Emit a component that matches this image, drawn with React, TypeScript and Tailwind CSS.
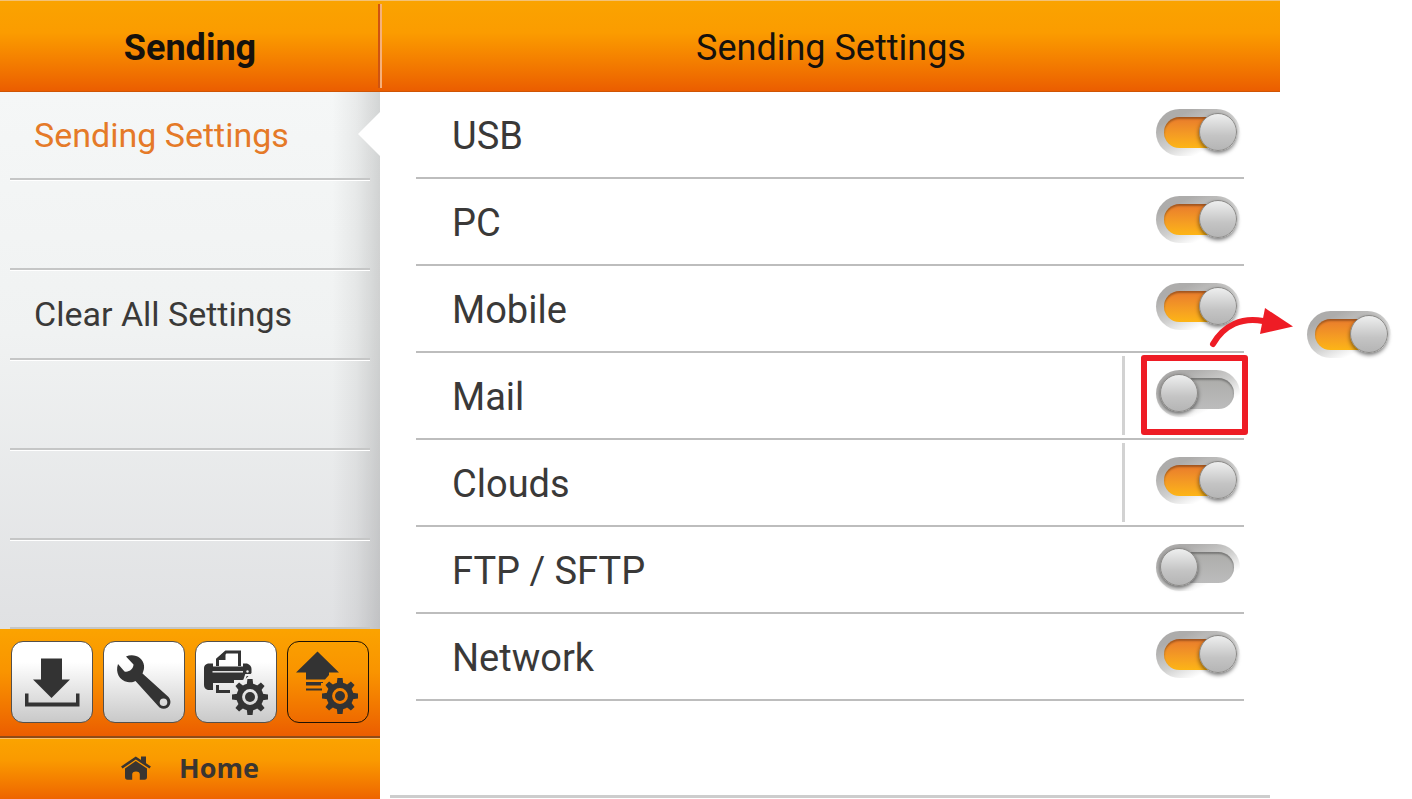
import type { ReactNode } from "react";

type Setting = { id: string; label: string; on: boolean; divided?: boolean; marked?: boolean };

const settings: Setting[] = [
  { id: "usb", label: "USB", on: true },
  { id: "pc", label: "PC", on: true },
  { id: "mobile", label: "Mobile", on: true },
  { id: "mail", label: "Mail", on: false, divided: true, marked: true },
  { id: "clouds", label: "Clouds", on: true, divided: true },
  { id: "ftp", label: "FTP / SFTP", on: false },
  { id: "network", label: "Network", on: true },
];

const menu = ["Sending Settings", "", "Clear All Settings", "", "", ""];

function Toggle({ id, on, label }: { id: string; on: boolean; label?: string }) {
  return (
    <input
      id={id}
      type="checkbox"
      defaultChecked={on}
      aria-label={label}
      className="relative block h-[47px] w-[84px] shrink-0 cursor-pointer appearance-none rounded-full bg-linear-155 from-[#adacab] from-20% via-[#cfcfce] via-50% to-white to-75% before:absolute before:top-2 before:left-2 before:h-[31px] before:w-[70px] before:rounded-full before:bg-linear-to-b before:from-[#acacaa] before:to-[#bcbcbc] before:shadow-[inset_0_2px_2px_rgba(0,0,0,0.3)] after:absolute after:top-1 after:left-1 after:size-[38px] after:rounded-full after:border after:border-[#8b8a88] after:bg-linear-to-b after:from-[#eeefef] after:via-[#c4c4c4] after:via-60% after:to-[#b5b5b5] after:shadow-[0_2px_4px_rgba(0,0,0,0.55)] checked:before:from-[#e87a2c] checked:before:to-[#fdb515] checked:after:left-[43px]"
    />
  );
}

function Gear({ x, y }: { x: number; y: number }) {
  return (
    <g transform={`translate(${x} ${y})`}>
      <circle r="10.7" fill="none" stroke="#333" strokeWidth="5.6" />
      <circle r="5" fill="#333" />
      {[0, 45, 90, 135, 180, 225, 270, 315].map((a) => (
        <path key={a} d="M-3.2-12.5-2.6-18H2.6L3.2-12.5Z" fill="#333" transform={`rotate(${a})`} />
      ))}
    </g>
  );
}

function ToolIcon({ children }: { children: ReactNode }) {
  return (
    <svg viewBox="0 0 82 82" className="absolute -inset-px size-[82px]" fill="#333" aria-hidden="true">
      {children}
    </svg>
  );
}

const tools = [
  {
    name: "Receive",
    icon: (
      <ToolIcon>
        <path d="M30 17.5H51V38.5H59L40.5 57 22 38.5H30Z" />
        <path d="M14 52.5H17.5V61.5H65V52.5H68.5V65.5H14Z" />
      </ToolIcon>
    ),
  },
  {
    name: "Maintenance",
    icon: (
      <ToolIcon>
        <path
          fillRule="evenodd"
          d="M23 15.5C31 12 40 16.500 41 24.500 41.400 27.500 40.500 30 39.500 32.500L65.500 56C71 62.500 64 71 56.500 66.500L32.500 40C30 41.500 27.500 41.500 24.500 41 16.500 39.500 12 31.500 15 23L21.500 30.500C26 31.500 30.500 28 30.500 23.500ZM60.500 57.500A3.800 3.800 0 1 0 60.500 65.100 3.800 3.800 0 1 0 60.500 57.500Z"
        />
      </ToolIcon>
    ),
  },
  {
    name: "Printer settings",
    icon: (
      <ToolIcon>
        <path d="M22.500 25V18.500L31 11H44.500V25" fill="none" stroke="#333" strokeWidth="3" />
        <path d="M21 19 30.500 10V19Z" />
        <path d="M13 22.500H18V25.500H48V22.500H52Q56.500 24 56.500 28V32L50 38.500 47 39H18V49H13Q9 48 9 44V27Q9 23.500 13 22.500Z" />
        <path d="M17.500 30.800H48" stroke="#e8e8e8" strokeWidth="1.500" />
        <path d="M18 40.500H39" stroke="#333" strokeWidth="3" />
        <path d="M22.500 44V50.500H35" fill="none" stroke="#333" strokeWidth="3" />
        <path d="M40 43 44 40 49 40 51 34 58 34" fill="none" stroke="#efefef" strokeWidth="2" />
        <circle cx="52.500" cy="30.500" r="1.200" fill="#eee" />
        <Gear x={55} y={56} />
      </ToolIcon>
    ),
  },
  {
    name: "Sending settings",
    active: true,
    icon: (
      <ToolIcon>
        <path d="M30.500 10.500 52 31.500H42V34L38 38.500H19V31.500H9Z" />
        <path d="M19 41H36V42H34V44.500H19ZM19 47.500H35V49.500H19Z" />
        <Gear x={53} y={55} />
      </ToolIcon>
    ),
  },
];

export default function App() {
  return (
    <div className="min-h-screen overflow-hidden bg-white pr-33 font-[Roboto,sans-serif] text-[#3a3938]">
      <div className="flex min-h-screen flex-col">
        {/* Title bar */}
        <header className="flex h-[92px] items-stretch border-t border-[#f3c276] border-b border-b-[#cf5505] bg-linear-to-b from-[#faa300] via-[#fb9c00] via-35% to-[#eb5d00] text-4xl text-[#15110c]">
          <h2 className="flex w-[380px] shrink-0 items-center justify-center pt-1 font-bold">Sending</h2>
          <span className="-ml-0.5 my-[3px] w-1 border-l-2 border-r-2 border-l-[#cf5410] border-r-[#f6b07a]" />
          <h1 className="flex flex-1 items-center justify-center pt-1">Sending Settings</h1>
        </header>

        <div className="flex flex-1">
          {/* Sidebar */}
          <aside className="flex w-[380px] shrink-0 flex-col">
            <nav className="relative flex-1 overflow-hidden bg-linear-to-b from-[#f5f7f7] via-[#f0f2f2] via-45% to-[#e0e1e3]">
              <div className="absolute inset-y-0 right-0 w-12 bg-linear-to-r from-transparent via-black/5 via-50% to-black/14" />
              <svg viewBox="0 0 22 44" className="absolute top-5 right-0 h-11 w-[22px]" aria-hidden="true">
                <path d="M22 0 0 22 22 44Z" fill="#fff" />
              </svg>
              <ul className="relative px-2.5 text-[34px]">
                {menu.map((item, i) => (
                  <li key={i} className="h-[90px] border-b border-white first:h-[89px] last:h-[88px] last:border-b-0">
                    <div className="flex h-full items-center border-b-2 border-[#c5c6c6] pl-6">
                      {item && (
                        <a href="#" className={i === 0 ? "text-[#e57a28]" : ""}>
                          {item}
                        </a>
                      )}
                    </div>
                  </li>
                ))}
              </ul>
            </nav>

            <div className="grid grid-cols-4 gap-2.5 border-b-2 border-[#8f4a16] bg-linear-to-b from-[#fba300] via-[#f99400] via-40% to-[#eb5d00] px-[11px] pt-3 pb-[13px]">
              {tools.map((t) => (
                <button
                  key={t.name}
                  aria-label={t.name}
                  className={
                    t.active
                      ? "relative h-[82px] rounded-xl border border-[#1d1205]"
                      : "relative h-[82px] rounded-xl border border-[#55504a] bg-linear-to-b from-white from-25% to-[#c9c9c9]"
                  }
                >
                  {t.icon}
                </button>
              ))}
            </div>

            <button className="flex h-[61px] items-center justify-center gap-7 border-t border-[#f7c06c] bg-linear-to-b from-[#fba300] via-[#fa9a00] via-35% to-[#ee6400] pb-0.5 font-['Open_Sans',sans-serif] text-[27px] font-bold text-[#3a3531]">
              <svg viewBox="0 0 30 24" className="h-6 w-[30px]" fill="#3a3531" aria-hidden="true">
                <path d="M.8 11.5 14.8 2 29.200 11.500" fill="none" stroke="#3a3531" strokeWidth="2.600" />
                <path d="M20 .5H25V8L20 4.500Z" />
                <path d="M14.800 5 26 12.500V21Q26 23.800 23.500 23.800H18.800V18.500Q18.800 15.500 15 15.500T11.200 18.500V23.800H6.500Q4 23.800 4 21V12.500Z" />
              </svg>
              Home
            </button>
          </aside>

          {/* Settings list */}
          <main className="flex flex-1 flex-col">
            <ul className="px-9">
              {settings.map((s) => (
                <li key={s.id} className="relative flex h-[87px] items-center border-b-2 border-[#bdbdbd] pr-1 pl-9">
                  <label htmlFor={s.id} className="flex-1 pt-1 text-[38px]">
                    {s.label}
                  </label>
                  {s.divided && <span className="mr-[31px] h-[79px] w-[3px] bg-[#d2d2d2]" />}
                  <div className="pb-1">
                    <Toggle id={s.id} on={s.on} />
                  </div>
                  {s.marked && <Callout />}
                </li>
              ))}
            </ul>
            <div className="mx-2.5 mt-auto mb-px h-[3px] bg-[#cdcdcd]" />
          </main>
        </div>
      </div>
    </div>
  );
}

/* Red frame round the switch, with an arrow to the state it should end up in */
function Callout() {
  return (
    <>
      <div className="pointer-events-none absolute top-0.5 -right-1 h-20 w-[107px] rounded-[3px] border-6 border-[#ee1c25]" />
      <svg viewBox="0 0 96 50" className="pointer-events-none absolute -top-13 -right-13 h-[50px] w-24" aria-hidden="true">
        <path d="M13 43C24 24 42 16 63 20" fill="none" stroke="#ee1c25" strokeWidth="6" strokeLinecap="round" />
        <path d="M65 7 93 25.500 60 33Z" fill="#ee1c25" />
      </svg>
      <div className="absolute -top-[42px] -right-[147px]">
        <Toggle id="mail-after" on label="Mail turned on" />
      </div>
    </>
  );
}
